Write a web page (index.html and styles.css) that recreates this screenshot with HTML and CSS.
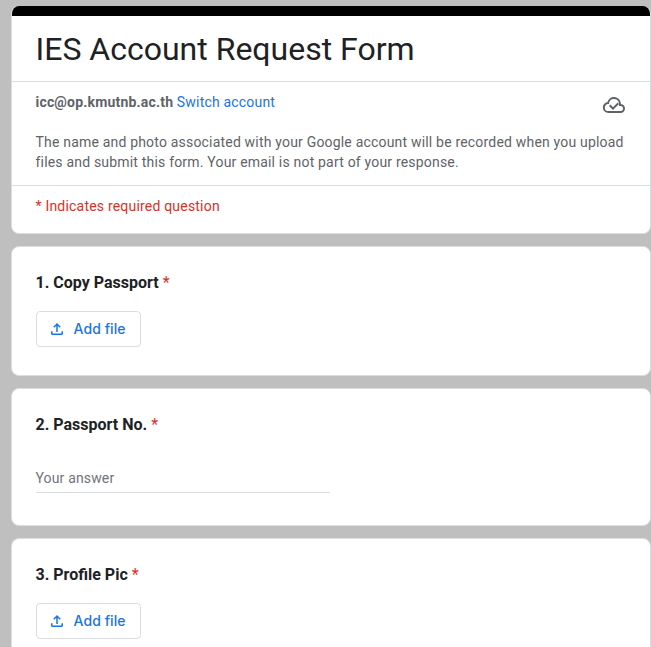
FILE: index.html
```html
<!DOCTYPE html>
<html lang="en">
<head>
<meta charset="utf-8">
<title>IES Account Request Form</title>
<link rel="stylesheet" href="styles.css">
</head>
<body>
<main class="form">
  <section class="card intro">
    <div class="accent"></div>
    <h1 class="title">IES Account Request Form</h1>
    <div class="account">
      <div class="account-row">
        <p class="identity"><span class="email">icc@op.kmutnb.ac.th</span> <a class="switch">Switch account</a></p>
        <svg class="cloud" viewBox="0 0 24 24"><path class="cloud-line" d="M6.500 19H18.500A3.500 3.500 0 0 0 18.500 12H18V11A6 6 0 0 0 6.100 10A4.500 4.500 0 0 0 6.500 19Z"/><path class="cloud-line check" d="M7.700 12.300L11 15.600L16.300 10.300"/></svg>
      </div>
      <p class="notice">The name and photo associated with your Google account will be recorded when you upload files and submit this form. Your email is not part of your response.</p>
    </div>
    <p class="required-note">* Indicates required question</p>
  </section>
  <section class="card question">
    <h2 class="label">1. Copy Passport <span class="star">*</span></h2>
    <button class="upload"><svg class="upload-icon" viewBox="0 0 24 24"><path d="M4 15h2v3h12v-3h2v3c0 1.100-.9 2-2 2H6c-1.100 0-2-.9-2-2zM7 9l1.410 1.410L11 7.830V16h2V7.830l2.590 2.580L17 9l-5-5z"/></svg>Add file</button>
  </section>
  <section class="card question answer">
    <h2 class="label">2. Passport No. <span class="star">*</span></h2>
    <div class="input">Your answer</div>
  </section>
  <section class="card question">
    <h2 class="label">3. Profile Pic <span class="star">*</span></h2>
    <button class="upload"><svg class="upload-icon" viewBox="0 0 24 24"><path d="M4 15h2v3h12v-3h2v3c0 1.100-.9 2-2 2H6c-1.100 0-2-.9-2-2zM7 9l1.410 1.410L11 7.830V16h2V7.830l2.590 2.580L17 9l-5-5z"/></svg>Add file</button>
  </section>
</main>
</body>
</html>
```
FILE: styles.css
```css
* { box-sizing: border-box; }
html { overflow: hidden; }
body { margin: 0; height: 647px; overflow: hidden; background: #bfbfbf; color: #202124; font-family: Roboto, sans-serif; }
h1, h2, p { margin: 0; }
.form { width: 640px; margin: 6px 0 0 11px; display: flex; flex-direction: column; gap: 12px; }
.card { background: #fff; border: 1px solid #dadce0; border-radius: 8px; }
.intro { height: 228px; border-top: 0; overflow: hidden; }
.accent { height: 10px; margin: 0 -1px; background: #000; }
.title { height: 65px; padding: 12px 23.5px 0; font-size: 32px; font-weight: 400; line-height: 43px; }
.account { height: 105px; padding: 10px 24px 0 23.5px; border: solid #dadce0; border-width: 1px 0; color: #5f6368; font-size: 14px; line-height: 20px; letter-spacing: .19px; }
.account-row { display: flex; justify-content: space-between; align-items: flex-start; height: 40px; }
.email { font-weight: 700; }
.switch { color: #1a73e8; }
.cloud { width: 24px; height: 24px; margin-top: 1px; }
.cloud-line { fill: none; stroke: #5f6368; stroke-width: 2; }
.required-note { padding: 10px 23.5px; color: #d93025; font-size: 14px; line-height: 20px; letter-spacing: .2px; }
.question { height: 130px; padding: 24px 24px 0 23.5px; }
.answer { height: 138px; }
.label { font-size: 16px; font-weight: 700; line-height: 24px; }
.star { color: #d93025; font-weight: 400; }
.upload { display: flex; align-items: center; gap: 7.5px; width: 105px; height: 36px; margin: 16px 0 0 .5px; padding: 0 0 0 11px; border: 1px solid #dadce0; border-radius: 4px; background: #fff; color: #1a73e8; font: 500 14px/20px Inter, sans-serif; letter-spacing: .08px; }
.upload-icon { width: 18px; height: 18px; fill: #1a73e8; }
.input { width: 294.4px; height: 25px; margin-top: 31px; border-bottom: 1px solid #dadce0; color: #70757a; font-size: 14px; line-height: 20px; letter-spacing: .15px; }
```
